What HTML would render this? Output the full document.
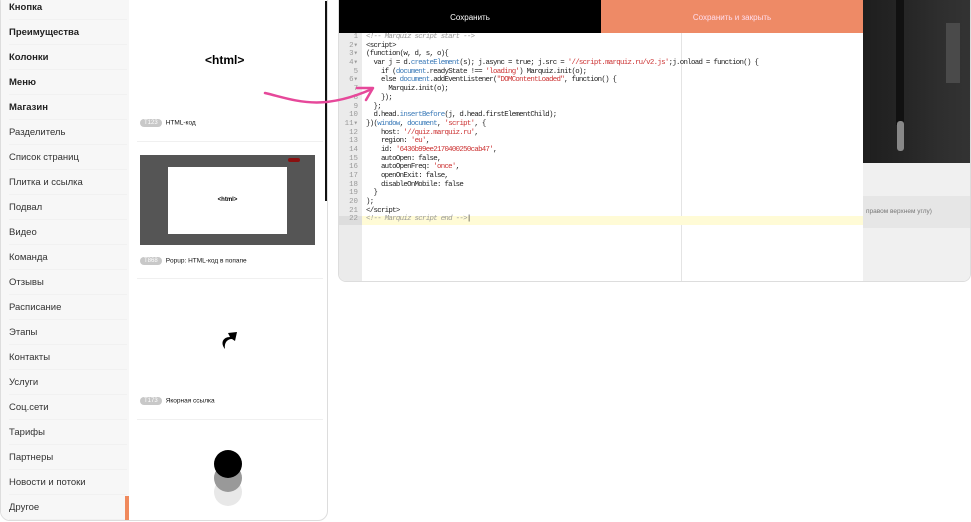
<!DOCTYPE html>
<html><head><meta charset="utf-8"><style>
*{margin:0;padding:0;box-sizing:border-box}
body{width:971px;height:522px;background:#fff;position:relative;overflow:hidden;font-family:"Liberation Sans",sans-serif}
.lp{position:absolute;left:0;top:-8px;width:328px;height:529px;border:1px solid #ddd;border-radius:10px;overflow:hidden;background:#fff}
.sb{position:absolute;left:0;top:0;width:128px;height:100%;background:#f7f7f7}
.sb div{position:absolute;left:8px;font-size:9.5px;color:#333;height:25px;line-height:25px;width:118px;border-bottom:1px solid #f1f1f1}
.sb .b{font-weight:bold;color:#222}
.tag{display:inline-block;background:#c8c8c8;color:#fff;font-size:6px;border-radius:5px;padding:1px 4px;margin-right:4px;vertical-align:middle}
.lbl{position:absolute;left:139px;font-size:6.5px;color:#111}
.rp{position:absolute;left:338px;top:-8px;width:633px;height:290px;border:1px solid #ddd;border-radius:8px;overflow:hidden;background:#fff}
.code{position:absolute;left:0;top:40px;width:524px;font-family:"Liberation Mono",monospace;font-size:7.4px;letter-spacing:-0.7px;line-height:8.7px;color:#222}
.code div{height:8.7px;white-space:pre;position:relative;padding-left:27px}
.code span.n{position:absolute;left:0;width:19px;text-align:right;color:#999;letter-spacing:0}
.c{color:#999;font-style:italic}.s{color:#c33}.f{color:#3a7ab8}
</style></head><body>
<div class="lp">
<div class="sb">
<div class="b" style="top:2px">Кнопка</div>
<div class="b" style="top:27px">Преимущества</div>
<div class="b" style="top:52px">Колонки</div>
<div class="b" style="top:77px">Меню</div>
<div class="b" style="top:102px">Магазин</div>
<div style="top:127px">Разделитель</div>
<div style="top:152px">Список страниц</div>
<div style="top:177px">Плитка и ссылка</div>
<div style="top:202px">Подвал</div>
<div style="top:227px">Видео</div>
<div style="top:252px">Команда</div>
<div style="top:277px">Отзывы</div>
<div style="top:302px">Расписание</div>
<div style="top:327px">Этапы</div>
<div style="top:352px">Контакты</div>
<div style="top:377px">Услуги</div>
<div style="top:402px">Соц.сети</div>
<div style="top:427px">Тарифы</div>
<div style="top:452px">Партнеры</div>
<div style="top:477px">Новости и потоки</div>
<div style="top:502px">Другое</div>
</div>
<div style="position:absolute;left:124px;top:503px;width:4px;height:26px;background:#f08a5d"></div>
<div style="position:absolute;left:324px;top:8px;width:3px;height:200px;background:#111"></div>
<div style="position:absolute;left:204px;top:60px;font-size:12px;font-weight:bold">&lt;html&gt;</div>
<div class="lbl" style="top:126px"><span class="tag">T123</span>HTML-код</div>
<div style="position:absolute;left:136px;top:148px;width:186px;height:1px;background:#f0f0f0"></div>
<div style="position:absolute;left:139px;top:162px;width:175px;height:90px;background:#555"><div style="position:absolute;left:28px;top:12px;width:119px;height:67px;background:#fff;font-size:6px;font-weight:bold;text-align:center;line-height:67px">&lt;html&gt;</div><div style="position:absolute;left:148px;top:3px;width:12px;height:4px;background:#8a1010;border-radius:2px"></div></div>
<div class="lbl" style="top:264px"><span class="tag">T868</span>Popup: HTML-код в попапе</div>
<div style="position:absolute;left:136px;top:285px;width:186px;height:1px;background:#f0f0f0"></div>
<svg style="position:absolute;left:216px;top:336px" width="22" height="22" viewBox="0 0 22 22"><path d="M8 20 C3 14 6 8 13 8 L11 4 L20 3 L18 12 L15 10 C10 10 7 14 8 20Z" fill="#000"/></svg>
<div class="lbl" style="top:404px"><span class="tag">T173</span>Якорная ссылка</div>
<div style="position:absolute;left:136px;top:426px;width:186px;height:1px;background:#f0f0f0"></div>
<div style="position:absolute;left:213px;top:485px;width:28px;height:28px;border-radius:50%;background:#e8e8e8"></div>
<div style="position:absolute;left:213px;top:471px;width:28px;height:28px;border-radius:50%;background:#999"></div>
<div style="position:absolute;left:213px;top:457px;width:28px;height:28px;border-radius:50%;background:#000"></div>
</div>
<div class="rp">
<div style="position:absolute;left:0;top:0;width:262px;height:40px;background:#000;color:#fff;font-size:8px;text-align:center;padding-top:20px">Сохранить</div>
<div style="position:absolute;left:262px;top:0;width:262px;height:40px;background:#ee8a66;color:#fde;font-size:8px;text-align:center;padding-top:20px">Сохранить и закрыть</div>
<div style="position:absolute;left:524px;top:0;width:109px;height:290px;background:#f0f0f0"></div>
<div style="position:absolute;left:524px;top:0;width:109px;height:170px;background:linear-gradient(90deg,#1e1e1e 0%,#262626 40%,#2e2e2e 70%,#333 100%)"><div style="position:absolute;left:33px;top:0;width:8px;height:132px;background:#111"></div><div style="position:absolute;left:34px;top:128px;width:7px;height:30px;background:#888;border-radius:3px"></div><div style="position:absolute;left:83px;top:30px;width:14px;height:60px;background:#4a4a4a"></div></div>
<div style="position:absolute;left:524px;top:203px;width:109px;height:32px;background:#e6e6e6;font-size:6.5px;color:#777;padding:12px 0 0 3px">правом верхнем углу)</div>
<div style="position:absolute;left:0;top:40px;width:23px;height:250px;background:#ebebeb"></div>
<div style="position:absolute;left:342px;top:40px;width:1px;height:250px;background:#e4e4e4"></div>
<div style="position:absolute;left:0;top:223px;width:524px;height:9px;background:#fffbd6"></div>
<div style="position:absolute;left:0;top:223px;width:23px;height:9px;background:#ddd"></div>
<div class="code">
<div><span class="n">1</span><span class="c">&lt;!-- Marquiz script start --&gt;</span></div>
<div><span class="n">2▾</span>&lt;script&gt;</div>
<div><span class="n">3▾</span>(function(w, d, s, o){</div>
<div><span class="n">4▾</span>  var j = d.<span class="f">createElement</span>(s); j.async = true; j.src = <span class="s">'//script.marquiz.ru/v2.js'</span>;j.onload = function() {</div>
<div><span class="n">5</span>    if (<span class="f">document</span>.readyState !== <span class="s">'loading'</span>) Marquiz.init(o);</div>
<div><span class="n">6▾</span>    else <span class="f">document</span>.addEventListener(<span class="s">"DOMContentLoaded"</span>, function() {</div>
<div><span class="n">7</span>      Marquiz.init(o);</div>
<div><span class="n">8</span>    });</div>
<div><span class="n">9</span>  };</div>
<div><span class="n">10</span>  d.head.<span class="f">insertBefore</span>(j, d.head.firstElementChild);</div>
<div><span class="n">11▾</span>})(<span class="f">window</span>, <span class="f">document</span>, <span class="s">'script'</span>, {</div>
<div><span class="n">12</span>    host: <span class="s">'//quiz.marquiz.ru'</span>,</div>
<div><span class="n">13</span>    region: <span class="s">'eu'</span>,</div>
<div><span class="n">14</span>    id: <span class="s">'6436b99ee2170400250cab47'</span>,</div>
<div><span class="n">15</span>    autoOpen: false,</div>
<div><span class="n">16</span>    autoOpenFreq: <span class="s">'once'</span>,</div>
<div><span class="n">17</span>    openOnExit: false,</div>
<div><span class="n">18</span>    disableOnMobile: false</div>
<div><span class="n">19</span>  }</div>
<div><span class="n">20</span>);</div>
<div><span class="n">21</span>&lt;/script&gt;</div>
<div><span class="n">22</span><span class="c">&lt;!-- Marquiz script end --&gt;</span>|</div>
</div>
</div>
<svg style="position:absolute;left:0;top:0" width="971" height="522"><path d="M265 93 C295 100 320 112 372 89" stroke="#e6489a" stroke-width="2.5" fill="none" stroke-linecap="round"/><path d="M357 88 L373 88 L366 100" stroke="#e6489a" stroke-width="2.5" fill="none" stroke-linecap="round" stroke-linejoin="round"/></svg>
</body></html>
